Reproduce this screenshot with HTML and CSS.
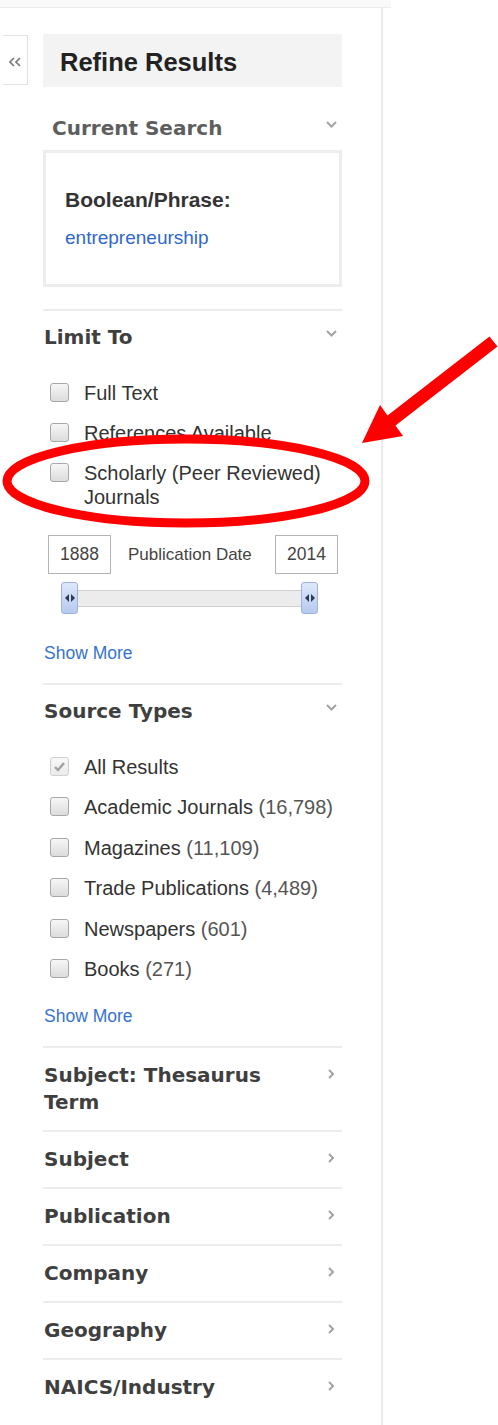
FILE: index.html
```html
<!DOCTYPE html>
<html lang="en">
<head>
    <meta charset="UTF-8">
    <meta name="viewport" content="width=device-width, initial-scale=1.0">
    <title>Refine Results</title>
    <link rel="stylesheet" href="styles.css">
</head>
<body>
    <div class="topbar"></div>
    <div class="page">
        <div class="collapse-btn">
            <svg width="12" height="10" viewBox="0 0 12 10"><polyline points="5,1 1,5 5,9" /><polyline points="11,1 7,5 11,9" /></svg>
        </div>
        <div class="sidebar">
            <div class="refine-head">Refine Results</div>

            <div class="current">
                <div class="facet-title current-title">
                    <span>Current Search</span>
                    <svg class="chev-down" width="11" height="7" viewBox="0 0 11 7"><polyline points="1,1 5.5,5.5 10,1" /></svg>
                </div>
                <div class="search-box">
                    <div class="bool-label">Boolean/Phrase:</div>
                    <a class="term" href="#">entrepreneurship</a>
                </div>
            </div>

            <div class="facet">
                <div class="facet-title">
                    <span>Limit To</span>
                    <svg class="chev-down" width="11" height="7" viewBox="0 0 11 7"><polyline points="1,1 5.5,5.5 10,1" /></svg>
                </div>
                <ul class="checks">
                    <li><span class="box"></span><span>Full Text</span></li>
                    <li><span class="box"></span><span>References Available</span></li>
                    <li><span class="box"></span><span>Scholarly (Peer Reviewed) Journals</span></li>
                </ul>
                <div class="date-row">
                    <div class="year">1888</div>
                    <div class="date-label">Publication Date</div>
                    <div class="year year-end">2014</div>
                </div>
                <div class="slider">
                    <div class="handle"><svg width="10" height="8" viewBox="0 0 10 8"><polygon points="0,4 4,0 4,8" /><polygon points="6,0 10,4 6,8" /></svg></div>
                    <div class="track"></div>
                    <div class="handle"><svg width="10" height="8" viewBox="0 0 10 8"><polygon points="0,4 4,0 4,8" /><polygon points="6,0 10,4 6,8" /></svg></div>
                </div>
                <a class="show-more" href="#">Show More</a>
            </div>

            <div class="facet">
                <div class="facet-title">
                    <span>Source Types</span>
                    <svg class="chev-down" width="11" height="7" viewBox="0 0 11 7"><polyline points="1,1 5.5,5.5 10,1" /></svg>
                </div>
                <ul class="checks source-list">
                    <li><span class="box checked"><svg width="13" height="11" viewBox="0 0 13 11"><polyline points="2,6 5,9 11,2" /></svg></span><span>All Results</span></li>
                    <li><span class="box"></span><span>Academic Journals <span class="count">(16,798)</span></span></li>
                    <li><span class="box"></span><span>Magazines <span class="count">(11,109)</span></span></li>
                    <li><span class="box"></span><span>Trade Publications <span class="count">(4,489)</span></span></li>
                    <li><span class="box"></span><span>Newspapers <span class="count">(601)</span></span></li>
                    <li><span class="box"></span><span>Books <span class="count">(271)</span></span></li>
                </ul>
                <a class="show-more show-more-tight" href="#">Show More</a>
            </div>

            <div class="facet collapsed">
                <div class="facet-title"><span>Subject: Thesaurus Term</span><svg class="chev-right" width="7" height="10" viewBox="0 0 7 10"><polyline points="1,1 5,5 1,9" /></svg></div>
            </div>
            <div class="facet collapsed">
                <div class="facet-title"><span>Subject</span><svg class="chev-right" width="7" height="10" viewBox="0 0 7 10"><polyline points="1,1 5,5 1,9" /></svg></div>
            </div>
            <div class="facet collapsed">
                <div class="facet-title"><span>Publication</span><svg class="chev-right" width="7" height="10" viewBox="0 0 7 10"><polyline points="1,1 5,5 1,9" /></svg></div>
            </div>
            <div class="facet collapsed">
                <div class="facet-title"><span>Company</span><svg class="chev-right" width="7" height="10" viewBox="0 0 7 10"><polyline points="1,1 5,5 1,9" /></svg></div>
            </div>
            <div class="facet collapsed">
                <div class="facet-title"><span>Geography</span><svg class="chev-right" width="7" height="10" viewBox="0 0 7 10"><polyline points="1,1 5,5 1,9" /></svg></div>
            </div>
            <div class="facet collapsed">
                <div class="facet-title"><span>NAICS/Industry</span><svg class="chev-right" width="7" height="10" viewBox="0 0 7 10"><polyline points="1,1 5,5 1,9" /></svg></div>
            </div>
        </div>
    </div>

    <!-- red annotation drawn on top of the screenshot -->
    <svg class="markup" width="498" height="560" viewBox="0 0 498 560">
        <ellipse cx="186" cy="481" rx="179" ry="42" />
        <polygon points="362,443 380,405 387.5,415.4 489.5,336.4 497.5,346.6 395.5,425.6 403,436" />
    </svg>
</body>
</html>
```

FILE: styles.css
```css
body {
    margin: 0;
    font-family: 'Liberation Sans', Arial, sans-serif;
    color: #333;
    background: #fff;
}
.topbar {
    width: 391px;
    height: 7px;
    background: #fafafa;
    border-bottom: 1px solid #ececec;
}
.page {
    display: flex;
    align-items: flex-start;
    width: 383px;
    min-height: calc(100vh - 8px);
    border-right: 2px solid #ebebeb;
    padding-top: 26px;
    box-sizing: border-box;
}
.collapse-btn {
    flex: none;
    margin: 1px 0 0 3px;
    width: 25px;
    height: 50px;
    box-sizing: border-box;
    border: 1px solid #e2e2e2;
    border-left: none;
    display: flex;
    align-items: center;
    justify-content: center;
    padding-top: 4px;
}
.collapse-btn polyline {
    fill: none;
    stroke: #7a7a7a;
    stroke-width: 1.7;
}
.sidebar {
    margin-left: 15px;
    width: 299px;
    flex: none;
}
.refine-head {
    height: 53px;
    box-sizing: border-box;
    background: #f3f3f3;
    padding: 3px 0 0 17px;
    display: flex;
    align-items: center;
    font-size: 25.5px;
    font-weight: bold;
    color: #222;
}
.facet-title {
    display: flex;
    justify-content: space-between;
    align-items: flex-start;
    padding-left: 1px;
    font-family: 'DejaVu Sans', Verdana, sans-serif;
    font-weight: bold;
    font-size: 20px;
    line-height: 24px;
    color: #3f3f3f;
}
.facet-title span {
    flex: 1;
    padding-right: 20px;
}
.chev-down {
    flex: none;
    margin: 5px 5px 0 0;
}
.chev-right {
    flex: none;
    margin: 7px 7px 0 0;
}
.chev-down polyline, .chev-right polyline {
    fill: none;
    stroke: #a3a3a3;
    stroke-width: 2;
}
.current-title {
    margin-top: 29px;
    padding-left: 9px;
    color: #5e5e5e;
}
.search-box {
    margin: 10px 0 22px;
    border: 3px solid #ededed;
    padding: 34px 19px;
}
.bool-label {
    font-size: 21px;
    font-weight: bold;
    line-height: 26px;
    color: #333;
}
.term {
    display: block;
    margin-top: 13px;
    font-size: 19px;
    line-height: 24px;
    color: #2f68cc;
    text-decoration: none;
}
.facet {
    border-top: 2px solid #ececec;
    padding: 14px 0 19px;
}
.facet.collapsed {
    padding: 14px 0;
}
.facet.collapsed .facet-title {
    line-height: 27px;
}
.checks {
    list-style: none;
    margin: 24px 0 0;
    padding: 0;
}
.checks li {
    display: flex;
    align-items: flex-start;
    padding: 8px 0 8px 7px;
    font-size: 20px;
    line-height: 24px;
    color: #333;
}
.source-list li {
    line-height: 24.4px;
}
.count {
    color: #555;
}
.box {
    flex: none;
    width: 19px;
    height: 19px;
    box-sizing: border-box;
    margin: 2px 15px 0 0;
    border: 1px solid #a8a8a8;
    border-radius: 3px;
    background: linear-gradient(#f6f6f6, #dcdcdc);
    display: flex;
    align-items: center;
    justify-content: center;
}
.box.checked {
    border-color: #cfcfcf;
    background: linear-gradient(#f8f8f8, #ebebeb);
}
.box.checked polyline {
    fill: none;
    stroke: #a0a0a0;
    stroke-width: 2.4;
}
.date-row {
    margin-top: 18px;
    display: flex;
    align-items: center;
    padding: 0 4px 0 5px;
}
.year {
    width: 63px;
    height: 39px;
    box-sizing: border-box;
    border: 1px solid #b3b3b3;
    display: flex;
    align-items: center;
    justify-content: center;
    font-size: 17.5px;
    color: #444;
}
.year-end {
    margin-left: auto;
}
.date-label {
    margin-left: 17px;
    font-size: 17px;
    color: #444;
}
.slider {
    margin: 8px 24px 0 18px;
    height: 32px;
    display: flex;
}
.handle {
    flex: none;
    width: 17px;
    height: 32px;
    box-sizing: border-box;
    border: 1px solid #9db2de;
    border-radius: 3px;
    background: linear-gradient(#dfe8fa, #b6c9ef);
    display: flex;
    align-items: center;
    justify-content: center;
}
.handle polygon {
    fill: #2d3a55;
}
.track {
    flex: 1;
    align-self: center;
    height: 17px;
    box-sizing: border-box;
    background: #ececec;
    border-top: 1px solid #cfcfcf;
    border-bottom: 1px solid #cfcfcf;
}
.show-more {
    display: block;
    margin-top: 28px;
    padding-left: 1px;
    font-size: 17.5px;
    line-height: 22px;
    color: #3673cf;
    text-decoration: none;
}
.show-more-tight {
    margin-top: 16px;
}
.markup {
    position: absolute;
    left: 0;
    top: 0;
    pointer-events: none;
}
.markup ellipse {
    fill: none;
    stroke: #ff0000;
    stroke-width: 9;
}
.markup polygon {
    fill: #ff0000;
}
```
